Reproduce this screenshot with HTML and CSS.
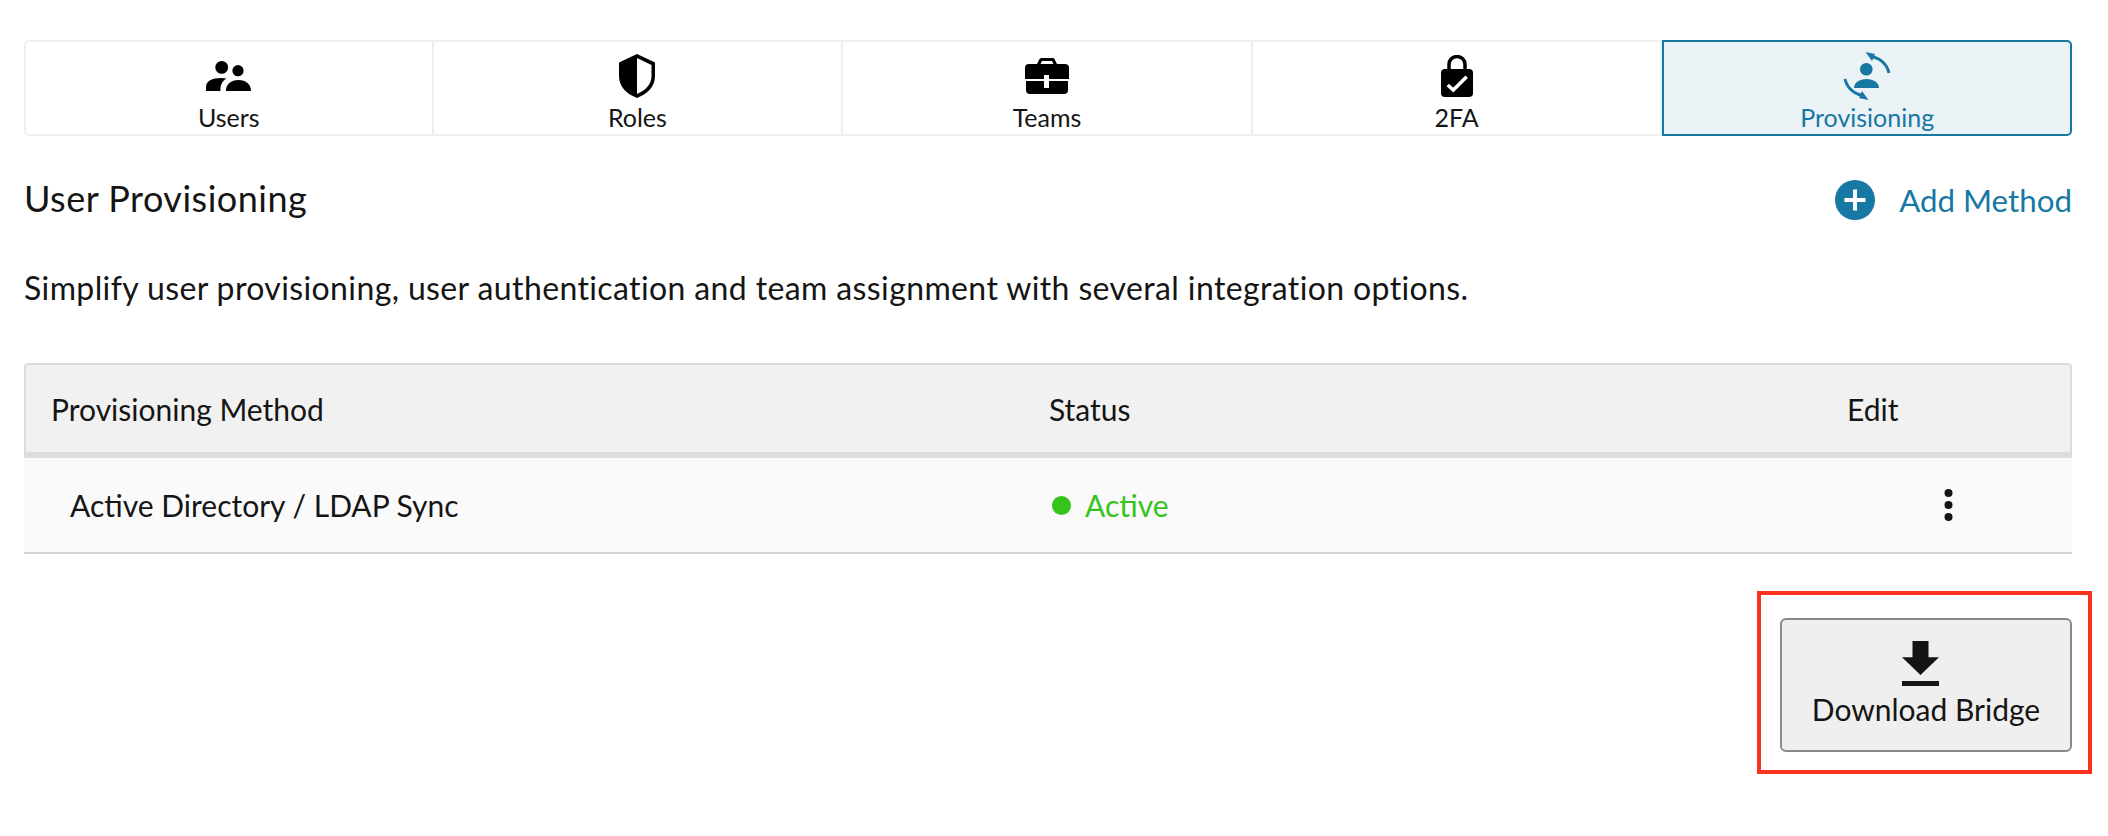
FILE: index.html
```html
<!DOCTYPE html>
<html lang="en">
<head>
<meta charset="utf-8">
<title>User Provisioning</title>
<link rel="stylesheet" href="styles.css">
</head>
<body>
<nav class="tabs">
  <a class="tab">
    <span class="tab-icon"><svg width="45" height="30" viewBox="0 0 45 30"><circle cx="15.7" cy="6.4" r="6.4"/><circle cx="32" cy="9.7" r="5.6"/><path d="M0 30v-4c0-6 6-9 15-9 2 0 4 .2 5.5.5C16 20 14 25 14.5 30zM20 30c0-7 5-11 12.5-11S45 23 45 30z"/></svg></span>
    <span class="tab-label">Users</span>
  </a>
  <a class="tab">
    <span class="tab-icon"><svg width="36" height="44" viewBox="0 0 36 44"><path fill-rule="evenodd" d="M18 0l18 8.500V22c0 11-8 18-18 22C8 40 0 33 0 22V8.500zM18 4v36c8-3.500 14.500-9 14.500-18V11z"/></svg></span>
    <span class="tab-label">Roles</span>
  </a>
  <a class="tab">
    <span class="tab-icon"><svg width="44" height="36" viewBox="0 0 44 36"><path fill-rule="evenodd" d="M12 6l2.500-5q.5-1 2-1h11q1.500 0 2 1L32 6h8q4 0 4 4v11H24v-4h-5v4H0V10q0-4 4-4zM15.500 6h13l-1.500-3H17z"/><path d="M1 23h18v7h5v-7h19v9q0 4-4 4H5q-4 0-4-4z"/></svg></span>
    <span class="tab-label">Teams</span>
  </a>
  <a class="tab">
    <span class="tab-icon"><svg width="32" height="42" viewBox="0 0 32 42"><path d="M8 15V9.500a8 8 0 0 1 16 0V15" fill="none" stroke="#000" stroke-width="3.500"/><rect y="14" width="32" height="28" rx="4"/><path d="M6.700 30l5.600 5L25.700 21.700" fill="none" stroke="#fff" stroke-width="3.500"/></svg></span>
    <span class="tab-label">2FA</span>
  </a>
  <a class="tab tab-active">
    <span class="tab-icon"><svg width="48" height="48" viewBox="0 0 48 48"><circle cx="23.300" cy="17.300" r="6.300"/><path d="M11 36c0-5.500 5.500-9 12.500-9S36 30.500 36 36z"/><path d="M27 4.500A21 21 0 0 1 46 21" fill="none" stroke="#1678a3" stroke-width="3"/><path d="M22.500 0L32 2l-3 7z"/><path d="M21 43.500A21 21 0 0 1 2 27" fill="none" stroke="#1678a3" stroke-width="3"/><path d="M25.500 48L16 46l3-7z"/></svg></span>
    <span class="tab-label">Provisioning</span>
  </a>
</nav>

<header class="section-head">
  <h1 class="section-title">User Provisioning</h1>
  <a class="add-method">
    <svg width="40" height="40" viewBox="0 0 40 40"><circle cx="20" cy="20" r="20" fill="#1678a3"/><path d="M18 9.500h4V18h8.500v4H22v8.500h-4V22H9.500v-4H18z" fill="#fff"/></svg>
    <span>Add Method</span>
  </a>
</header>

<p class="intro">Simplify user provisioning, user authentication and team assignment with several integration options.</p>

<section class="table">
  <div class="table-head">
    <div class="cell-name">Provisioning Method</div>
    <div>Status</div>
    <div>Edit</div>
  </div>
  <div class="table-row">
    <div class="cell-name">Active Directory / LDAP Sync</div>
    <div class="status"><span class="dot"></span>Active</div>
    <div class="kebab"><svg width="9" height="32" viewBox="0 0 9 32"><circle cx="4.500" cy="4" r="4"/><circle cx="4.500" cy="16" r="4"/><circle cx="4.500" cy="28" r="4"/></svg></div>
  </div>
</section>

<div class="actions">
  <div class="callout">
    <button class="download" type="button">
      <svg width="37" height="45" viewBox="0 0 37 45"><path d="M10.500 0h16v16.300H37L18.500 34 0 16.300h10.500zM0 40h37v5H0z"/></svg>
      <span>Download Bridge</span>
    </button>
  </div>
</div>
</body>
</html>
```

FILE: styles.css
```css
* {
  box-sizing: border-box;
}

html,
body {
  margin: 0;
  background: #fff;
}

body {
  padding: 40px 36px 0 24px;
  color: #151515;
  font-family: "Lato", "Noto Sans", sans-serif;
  font-size: 30px;
  height: 836px;
  overflow: hidden;
}

.tabs {
  display: grid;
  grid-template-columns: repeat(5, 1fr);
  height: 96px;
}

.tab {
  display: flex;
  flex-direction: column;
  align-items: center;
  border: 2px solid #efefef;
  border-left-width: 0;
  color: #151515;
  font-size: 25px;
}

.tab:first-child {
  border-left-width: 2px;
  border-radius: 5px 0 0 5px;
}

.tab-icon {
  height: 64px;
  display: flex;
  align-items: center;
  justify-content: center;
  margin-top: 2px;
}

.tab-label {
  line-height: 24px;
  margin-top: -3px;
}

.tab-icon svg {
  fill: #000;
  display: block;
}

.tab-active {
  background: #ebf3f7;
  border: 2px solid #1678a3;
  border-radius: 0 5px 5px 0;
  color: #1678a3;
}

.tab-active svg {
  fill: #1678a3;
}

.section-head {
  display: flex;
  justify-content: space-between;
  align-items: center;
  height: 40px;
  margin-top: 44px;
}

.section-title {
  margin: -4px 0 0;
  font-size: 36px;
  font-weight: 400;
  letter-spacing: 0.5px;
}

.add-method {
  display: flex;
  align-items: center;
  gap: 24px;
  color: #1678a3;
  font-size: 31.300px;
}

.intro {
  margin: 48px 0 0;
  font-size: 32px;
  line-height: 40px;
  letter-spacing: 0.38px;
}

.table {
  margin-top: 55px;
}

.table-head,
.table-row {
  display: grid;
  align-items: center;
}

.table-head {
  height: 95px;
  background: #f1f1f1;
  border: 2px solid #dcdcdc;
  border-bottom-width: 6px;
  border-radius: 4px 4px 0 0;
  grid-template-columns: 1023px 798px 1fr;
}

.table-head .cell-name {
  padding-left: 25px;
}

.table-row {
  height: 96px;
  background: #fafafa;
  border-bottom: 2px solid #d2d2d2;
  grid-template-columns: 1025px 799px 1fr;
}

.table-row .cell-name {
  padding-left: 46px;
}

.status {
  display: flex;
  align-items: center;
  gap: 14px;
  padding-left: 3px;
  color: #35c41c;
}

.dot {
  width: 19px;
  height: 19px;
  border-radius: 50%;
  background: #35c41c;
}

.kebab {
  padding-left: 96px;
  display: flex;
}

.kebab svg {
  fill: #151515;
}

.actions {
  display: flex;
  justify-content: flex-end;
  margin-top: 64px;
}

.callout {
  position: relative;
}

.callout::after {
  content: "";
  position: absolute;
  top: -27px;
  right: -20px;
  bottom: -22px;
  left: -23px;
  border: 4px solid #f8321f;
  pointer-events: none;
}

.download {
  display: flex;
  flex-direction: column;
  align-items: center;
  gap: 3px;
  width: 292px;
  height: 134px;
  padding: 21px 0 0;
  background: #efefef;
  border: 2px solid #8a8a8a;
  border-radius: 6px;
  color: #151515;
  font: inherit;
  line-height: 40px;
}

.download svg {
  fill: #151515;
  display: block;
  margin-right: 11px;
}
```
